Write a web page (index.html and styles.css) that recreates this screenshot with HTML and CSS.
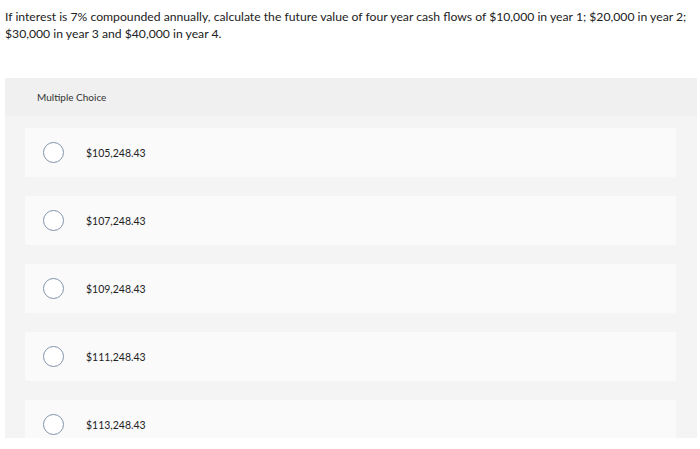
FILE: index.html
```html
<!DOCTYPE html>
<html>
<head>
<meta charset="utf-8">
<link rel="stylesheet" href="styles.css">
</head>
<body>
<p class="question">If interest is 7% compounded annually, calculate the future value of four year cash flows of $10,000 in year 1; $20,000 in year&nbsp;2; $30,000 in year 3 and $40,000 in year 4.</p>
<div class="panel">
  <div class="panel-head">Multiple Choice</div>
  <div class="options">
    <div class="option"><span class="radio"></span><span class="label">$105,248.43</span></div>
    <div class="option"><span class="radio"></span><span class="label">$107,248.43</span></div>
    <div class="option"><span class="radio"></span><span class="label">$109,248.43</span></div>
    <div class="option"><span class="radio"></span><span class="label">$111,248.43</span></div>
    <div class="option"><span class="radio"></span><span class="label">$113,248.43</span></div>
  </div>
</div>
</body>
</html>
```
FILE: styles.css
```css
html, body { margin: 0; padding: 0; background: #fff; }
body { font-family: "Lato", "Liberation Sans", sans-serif; color: #222; height: 449px; overflow: hidden; }
.question { margin: 0; padding: 8px 0 0 5px; font-size: 12.2px; line-height: 17px; width: 693px; box-sizing: border-box; }
.panel { margin: 36px 3px 0 5px; background: #f4f4f4; height: 360px; overflow: hidden; }
.panel-head { height: 38px; background: #f0f0f0; display: flex; align-items: center; padding-left: 32px; font-size: 10px; color: #333; }
.options { padding: 12px 21px 0 20px; display: flex; flex-direction: column; gap: 19px; }
.option { height: 49px; background: #fafafa; border-radius: 2px; display: flex; align-items: center; padding-left: 18px; }
.radio { width: 21px; height: 21px; border: 1.5px solid #8193ab; border-radius: 50%; box-sizing: border-box; background: #fff; }
.label { margin-left: 22px; font-size: 10.5px; color: #222; }
```
